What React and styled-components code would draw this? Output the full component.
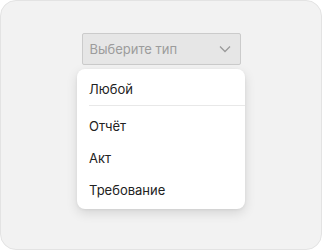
import React from "react";
import styled, { createGlobalStyle } from "styled-components";

const GlobalStyle = createGlobalStyle`
  html, body {
    margin: 0;
    padding: 0;
    background: #ffffff;
  }
  body {
    font-family: Inter, "Noto Sans", sans-serif;
  }
`;

const Frame = styled.div`
  box-sizing: border-box;
  width: 322px;
  height: 250px;
  background: #f2f2f2;
  border: 1px solid #e3e3e3;
  border-radius: 16px;
  display: flex;
  flex-direction: column;
  align-items: center;
  padding-top: 32px;
`;

const Select = styled.div`
  box-sizing: border-box;
  width: 159px;
  height: 32px;
  display: flex;
  align-items: center;
  justify-content: space-between;
  padding: 0 9px 0 7px;
  background: #e6e6e6;
  border: 1px solid #cbcbcb;
  border-radius: 2px;
  font-size: 13px;
  color: #9c9c9c;
`;

const Menu = styled.div`
  box-sizing: border-box;
  width: 168px;
  margin-top: 4px;
  padding: 4px 0 3px;
  background: #ffffff;
  border-radius: 8px;
  box-shadow: 0 4px 12px rgba(0, 0, 0, 0.12), 0 1px 3px rgba(0, 0, 0, 0.06);
`;

const Item = styled.div`
  height: 32px;
  display: flex;
  align-items: center;
  padding-left: 12px;
  font-size: 13px;
  color: #222222;
`;

const Divider = styled.div`
  height: 1px;
  margin: 0 0 4px 12px;
  background: #e8e8e8;
`;

const Chevron = () => (
  <svg width="12" height="8" viewBox="0 0 12 8" fill="none">
    <path d="M1 1.5L6 6.5L11 1.5" stroke="#9a9a9a" strokeWidth="1.3" />
  </svg>
);

const App = () => {
  return (
    <>
      <GlobalStyle />
      <Frame>
        <Select>
          <span>Выберите тип</span>
          <Chevron />
        </Select>
        <Menu>
          <Item>Любой</Item>
          <Divider />
          <Item>Отчёт</Item>
          <Item>Акт</Item>
          <Item>Требование</Item>
        </Menu>
      </Frame>
    </>
  );
};

export default App;
